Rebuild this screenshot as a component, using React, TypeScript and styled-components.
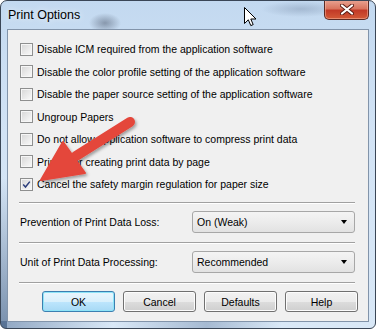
import React from "react";
import styled, { createGlobalStyle } from "styled-components";

const GlobalStyle = createGlobalStyle`
  html, body { margin: 0; padding: 0; background: #ffffff; }
  #root { width: 376px; height: 329px; }
`;

const font = `"Liberation Sans", Arial, sans-serif`;

const options = [
  { label: "Disable ICM required from the application software", checked: false },
  { label: "Disable the color profile setting of the application software", checked: false },
  { label: "Disable the paper source setting of the application software", checked: false },
  { label: "Ungroup Papers", checked: false },
  { label: "Do not allow application software to compress print data", checked: false },
  { label: "Print after creating print data by page", checked: false },
  { label: "Cancel the safety margin regulation for paper size", checked: true },
];

const fields = [
  { label: "Prevention of Print Data Loss:", value: "On (Weak)" },
  { label: "Unit of Print Data Processing:", value: "Recommended" },
];

const buttons = ["OK", "Cancel", "Defaults", "Help"];

export default function App() {
  return (
    <>
      <GlobalStyle />
      <Window>
        <TitleBar>
          <Title>Print Options</Title>
          <CloseButton>
            <svg width="14" height="11" viewBox="0 0 14 11">
              <path d="M2 1.5 L12 9.5 M12 1.5 L2 9.5" stroke="#5a1c14" strokeWidth="4" strokeLinecap="round" />
              <path d="M2 1.5 L12 9.5 M12 1.5 L2 9.5" stroke="#ffffff" strokeWidth="2.2" strokeLinecap="round" />
            </svg>
          </CloseButton>
        </TitleBar>
        <Client>
          <CheckList>
            {options.map((o) => (
              <CheckRow key={o.label}>
                <Box>
                  {o.checked && (
                    <svg width="9" height="9" viewBox="0 0 9 9">
                      <path d="M1.2 4.6 L3.5 7 L7.8 1.6" fill="none" stroke="#2d3f7c" strokeWidth="1.5" />
                    </svg>
                  )}
                </Box>
                <Label>{o.label}</Label>
              </CheckRow>
            ))}
          </CheckList>
          {fields.map((f, i) => (
            <React.Fragment key={f.label}>
              <Separator $first={i === 0} />
              <FieldRow>
                <Label>{f.label}</Label>
                <Combo>
                  <span>{f.value}</span>
                  <Caret />
                </Combo>
              </FieldRow>
            </React.Fragment>
          ))}
          <Separator />
          <ButtonRow>
            {buttons.map((b) => (
              <Button key={b} $primary={b === "OK"}>{b}</Button>
            ))}
          </ButtonRow>
        </Client>
        <Overlay width="376" height="329" viewBox="0 0 376 329">
          <defs>
            <filter id="shadow" x="-20%" y="-20%" width="140%" height="140%">
              <feDropShadow dx="1.5" dy="2" stdDeviation="1.5" floodColor="#000" floodOpacity="0.35" />
            </filter>
          </defs>
          <g filter="url(#shadow)" fill="#e4463b" stroke="#e4463b">
            <line x1="130" y1="122" x2="76" y2="156" strokeWidth="10" strokeLinecap="round" />
            <polygon points="41,180 63,142 85,173" strokeWidth="2" strokeLinejoin="round" />
          </g>
        </Overlay>
        <Cursor width="13" height="21" viewBox="0 0 13 21">
          <path d="M0.5 0.5 L0.5 16.5 L4.3 12.8 L6.8 18.6 L9.2 17.6 L6.8 12 L12 12 Z" fill="#ffffff" stroke="#000000" strokeWidth="1" strokeLinejoin="round" />
        </Cursor>
      </Window>
    </>
  );
}

const Window = styled.div`
  position: relative;
  width: 376px;
  height: 329px;
  box-sizing: border-box;
  border: 1px solid #3a4656;
  border-radius: 7px 7px 6px 6px;
  display: flex;
  flex-direction: column;
  overflow: hidden;
  background:
    linear-gradient(to bottom, rgba(40, 70, 110, 0) 0%, rgba(40, 70, 110, 0.55) 100%) left bottom / 6px 150px no-repeat,
    linear-gradient(to right, rgba(70, 100, 140, 0.5), rgba(210, 230, 248, 0) 30%, rgba(70, 100, 140, 0.35) 55%, rgba(210, 230, 248, 0) 75%) left bottom / 100% 7px no-repeat,
    radial-gradient(ellipse 16px 10px at 104px 22px, rgba(60, 70, 90, 0.45), rgba(60, 70, 90, 0)),
    radial-gradient(ellipse 40px 8px at 300px 8px, rgba(90, 110, 140, 0.3), rgba(90, 110, 140, 0)),
    linear-gradient(to bottom, #c3d9f0 0%, #d2e3f5 40%, #d9e8f7 100%);
  font-family: ${font};
`;

const TitleBar = styled.div`
  height: 28px;
  display: flex;
  align-items: flex-start;
  padding-left: 7px;
  flex-shrink: 0;
`;

const Title = styled.div`
  margin-top: 7px;
  font-size: 12.5px;
  color: #000000;
  text-shadow: 0 0 6px rgba(255, 255, 255, 0.9);
`;

const CloseButton = styled.div`
  margin-left: auto;
  margin-right: 6px;
  margin-top: -1px;
  width: 45px;
  height: 20px;
  box-sizing: border-box;
  border: 1px solid #5c2a24;
  border-top: none;
  border-radius: 0 0 5px 5px;
  background: linear-gradient(to bottom, #e9a594 0%, #d9755f 45%, #c23a27 55%, #d35a37 100%);
  box-shadow: inset 0 0 0 1px rgba(255, 200, 180, 0.45);
  display: flex;
  align-items: center;
  justify-content: center;
`;

const Client = styled.div`
  flex: 1;
  min-height: 0;
  margin: 0 6px 6px 6px;
  border: 1px solid #8294aa;
  background: #f0f0f0;
  padding: 8px 13px 0 12px;
  display: flex;
  flex-direction: column;
`;

const CheckList = styled.div`
  display: flex;
  flex-direction: column;
`;

const CheckRow = styled.div`
  height: 22.5px;
  display: flex;
  align-items: center;
  gap: 4px;
`;

const Box = styled.div`
  width: 13px;
  height: 13px;
  box-sizing: border-box;
  border: 1px solid #8e8f8f;
  background: linear-gradient(135deg, #d6d6d6 0%, #ececec 60%, #fafafa 100%);
  box-shadow: inset 0 0 0 1px #f6f6f6;
  display: flex;
  align-items: center;
  justify-content: center;
  flex-shrink: 0;
`;

const Label = styled.span`
  font-size: 10.5px;
  color: #000000;
  white-space: nowrap;
`;

const Separator = styled.div<{ $first?: boolean }>`
  height: 1px;
  flex-shrink: 0;
  margin: ${(p) => (p.$first ? "6.5px" : "0")} 0 0 -1px;
  background: #a0a0a0;
  border-bottom: 1px solid #ffffff;
`;

const FieldRow = styled.div`
  display: flex;
  align-items: center;
  padding: 7px 0 9px 0;
`;

const Combo = styled.div`
  margin-left: auto;
  width: 163px;
  height: 22px;
  box-sizing: border-box;
  border: 1px solid #a7a7a7;
  border-radius: 3px;
  background: linear-gradient(to bottom, #f4f4f4 0%, #ececec 50%, #e2e2e2 100%);
  display: flex;
  align-items: center;
  padding: 0 7px 0 4px;
  font-size: 10.5px;
  color: #000000;
  justify-content: space-between;
`;

const Caret = styled.span`
  width: 0;
  height: 0;
  border-left: 3.5px solid transparent;
  border-right: 3.5px solid transparent;
  border-top: 4px solid #000000;
`;

const ButtonRow = styled.div`
  display: flex;
  justify-content: flex-end;
  gap: 8px;
  margin-right: -3px;
  padding: 7px 0 9px 0;
`;

const Button = styled.div<{ $primary?: boolean }>`
  width: 73px;
  height: 21px;
  box-sizing: border-box;
  border: 1px solid ${(p) => (p.$primary ? "#3c7fb1" : "#707070")};
  border-radius: 3px;
  background: ${(p) =>
    p.$primary
      ? "linear-gradient(to bottom, #eaf6fd 0%, #d9f0fc 50%, #bee6fd 50%, #a7d9f5 100%)"
      : "linear-gradient(to bottom, #f2f2f2 0%, #ebebeb 50%, #dddddd 50%, #cfcfcf 100%)"};
  box-shadow: inset 0 0 0 1px ${(p) => (p.$primary ? "#8ee4f7" : "#fcfcfc")};
  display: flex;
  align-items: center;
  justify-content: center;
  font-size: 10.5px;
  color: #000000;
`;

const Overlay = styled.svg`
  position: absolute;
  left: -1px;
  top: -1px;
  pointer-events: none;
`;

const Cursor = styled.svg`
  position: absolute;
  left: 243px;
  top: 6px;
  pointer-events: none;
`;
